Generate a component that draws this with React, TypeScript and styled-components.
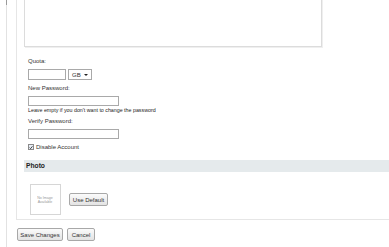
import React from "react";
import styled, { createGlobalStyle } from "styled-components";

const Global = createGlobalStyle`
  html, body { margin: 0; padding: 0; background: #fff; overflow: hidden; }
  body { font-family: "Liberation Sans", Arial, sans-serif; color: #333; }
`;

const Root = styled.div`
  display: flex;
  min-height: 100vh;
`;

const Rail = styled.div`
  width: 16px;
  flex: none;
  padding-left: 6px;
  box-sizing: border-box;
  display: flex;
`;

const RailLine = styled.div`
  width: 1px;
  background: linear-gradient(#9a9a9a 0, #9a9a9a 5px, #e2e2e2 5px);
`;

const Main = styled.div`
  flex: 1;
  display: flex;
  flex-direction: column;
  min-width: 0;
`;

const Panel = styled.div`
  border-left: 1px solid #e6e6e6;
  border-bottom: 1px solid #e6e6e6;
  padding: 0 0 4px 7px;
  height: 220px;
  box-sizing: border-box;
`;

const TextBox = styled.div`
  width: 298px;
  height: 67px;
  margin-top: -20px;
  box-sizing: border-box;
  border: 1px solid #dcdcdc;
  box-shadow: 1px 1px 0 #efefef;
  background: #fff;
`;

const Form = styled.div`
  padding-left: 4px;
  display: flex;
  flex-direction: column;
`;

const Label = styled.div<{ $top: number }>`
  font-size: 6px;
  line-height: 8px;
  height: 8px;
  margin-top: ${(p) => p.$top}px;
  color: #333;
`;

const Row = styled.div<{ $top: number }>`
  display: flex;
  align-items: center;
  gap: 2px;
  margin-top: ${(p) => p.$top}px;
`;

const Input = styled.div<{ $w: number; $h: number }>`
  width: ${(p) => p.$w}px;
  height: ${(p) => p.$h}px;
  box-sizing: border-box;
  border: 1px solid #a9a9a9;
  background: #fff;
`;

const Select = styled.div`
  width: 24px;
  height: 11px;
  box-sizing: border-box;
  border: 1px solid #a9a9a9;
  background: #fff;
  font-size: 6px;
  display: flex;
  align-items: center;
  justify-content: space-between;
  padding: 0 3px 0 3px;
  color: #333;
`;

const Caret = styled.span`
  width: 0;
  height: 0;
  border-left: 2px solid transparent;
  border-right: 2px solid transparent;
  border-top: 2px solid #222;
`;

const Hint = styled.div`
  font-size: 5.3px;
  line-height: 6px;
  height: 6px;
  margin-top: 1px;
  color: #222;
  white-space: nowrap;
`;

const CheckRow = styled.label`
  display: flex;
  align-items: center;
  gap: 2px;
  margin-top: 4px;
  height: 8px;
  font-size: 6px;
  color: #333;
`;

const Check = styled.span`
  width: 6px;
  height: 6px;
  box-sizing: border-box;
  border: 1px solid #8a8a8a;
  background: #e8eef6;
  display: flex;
  align-items: center;
  justify-content: center;
  svg { display: block; }
`;

const SectionHeader = styled.div`
  margin-top: 9px;
  height: 12px;
  background: #e5eaec;
  font-size: 6.7px;
  font-weight: bold;
  line-height: 12px;
  padding-left: 2px;
  color: #222;
`;

const PhotoRow = styled.div`
  display: flex;
  align-items: center;
  gap: 8px;
  padding-left: 6px;
  margin-top: 12px;
`;

const ImageBox = styled.div`
  width: 31px;
  height: 31px;
  box-sizing: border-box;
  border: 1px solid #d6d6d6;
  display: flex;
  align-items: center;
  justify-content: center;
  overflow: hidden;
`;

const Tiny = styled.div`
  font-size: 6px;
  line-height: 6px;
  color: #999;
  text-align: center;
  transform: scale(0.6);
  white-space: nowrap;
`;

const Button = styled.button<{ $w: number }>`
  width: ${(p) => p.$w}px;
  height: 13px;
  padding: 0;
  box-sizing: border-box;
  border: 1px solid #a8a8a8;
  border-radius: 2px;
  background: linear-gradient(#fbfbfb, #e3e3e3);
  font-family: "Liberation Sans", Arial, sans-serif;
  font-size: 6px;
  color: #333;
`;

const Actions = styled.div`
  display: flex;
  gap: 4px;
  margin-top: 8px;
  padding-left: 1px;
`;

export default function App() {
  return (
    <>
      <Global />
      <Root>
        <Rail>
          <RailLine />
        </Rail>
        <Main>
          <Panel>
            <TextBox />
            <Form>
              <Label $top={10}>Quota:</Label>
              <Row $top={4}>
                <Input $w={38} $h={11} />
                <Select>
                  GB <Caret />
                </Select>
              </Row>
              <Label $top={4}>New Password:</Label>
              <Row $top={4}>
                <Input $w={91} $h={10} />
              </Row>
              <Hint>Leave empty if you don't want to change the password</Hint>
              <Label $top={4}>Verify Password:</Label>
              <Row $top={4}>
                <Input $w={91} $h={10} />
              </Row>
              <CheckRow>
                <Check>
                  <svg width="5" height="5" viewBox="0 0 10 10">
                    <path d="M1.5 5.2 L4 7.8 L8.7 2" fill="none" stroke="#222" strokeWidth="2" />
                  </svg>
                </Check>
                Disable Account
              </CheckRow>
            </Form>
            <SectionHeader>Photo</SectionHeader>
            <PhotoRow>
              <ImageBox>
                <Tiny>
                  No Image
                  <br />
                  Available
                </Tiny>
              </ImageBox>
              <Button $w={39}>Use Default</Button>
            </PhotoRow>
          </Panel>
          <Actions>
            <Button $w={46}>Save Changes</Button>
            <Button $w={28}>Cancel</Button>
          </Actions>
        </Main>
      </Root>
    </>
  );
}
